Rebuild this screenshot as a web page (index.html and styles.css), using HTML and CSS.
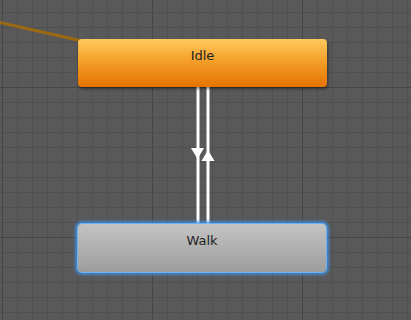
FILE: index.html
```html
<!DOCTYPE html>
<html lang="en">
<head>
    <meta charset="UTF-8">
    <meta name="viewport" content="width=device-width, initial-scale=1.0">
    <title>Animator</title>
    <link rel="stylesheet" href="styles.css">
</head>
<body>
    <div class="graph">
        <svg class="edges" width="411" height="320" viewBox="0 0 411 320">
            <!-- transition coming from off-screen -->
            <line x1="-2" y1="22" x2="82" y2="41" stroke="#9c6a12" stroke-width="3"/>
            <!-- Idle -> Walk -->
            <line x1="198" y1="87" x2="198" y2="224" stroke="#ffffff" stroke-width="3"/>
            <polygon points="191,148 204,148 197.5,159" fill="#ffffff"/>
            <!-- Walk -> Idle -->
            <line x1="208" y1="87" x2="208" y2="224" stroke="#ffffff" stroke-width="3"/>
            <polygon points="201.5,161 214.5,161 208,150" fill="#ffffff"/>
        </svg>

        <div class="node node-default idle">Idle</div>
        <div class="node node-selected walk">Walk</div>
    </div>
</body>
</html>
```

FILE: styles.css
```css
body {
    margin: 0;
    padding: 0;
    background-color: #595959;
    font-family: "DejaVu Sans", Verdana, sans-serif;
}
.graph {
    position: relative;
    width: 411px;
    height: 320px;
    overflow: hidden;
    background-color: #595959;
    background-image:
        linear-gradient(to right, #464646 1px, transparent 1px),
        linear-gradient(to bottom, #464646 1px, transparent 1px),
        linear-gradient(to right, #505050 1px, transparent 1px),
        linear-gradient(to bottom, #505050 1px, transparent 1px);
    background-size: 150px 150px, 150px 150px, 15px 15px, 15px 15px;
    background-position: 2px 87px, 2px 87px, 2px 12px, 2px 12px;
}
.edges {
    position: absolute;
    left: 0;
    top: 0;
}
.node {
    position: absolute;
    box-sizing: border-box;
    width: 249px;
    height: 48px;
    padding-top: 9px;
    border-radius: 4px;
    text-align: center;
    font-size: 13px;
    line-height: 16px;
    color: #222;
}
.node-default {
    background: linear-gradient(to bottom, #ffc95c 0%, #f4a02a 45%, #e67200 100%);
    box-shadow: 1px 2px 3px rgba(0,0,0,0.45);
}
.node-selected {
    background: linear-gradient(to bottom, #c3c3c3 0%, #9d9d9d 100%);
    box-shadow: 0 0 0 1px #6ab4f5, 0 0 3px 3px rgba(60,150,240,0.75);
}
.idle {
    left: 78px;
    top: 39px;
}
.walk {
    left: 78px;
    top: 224px;
    width: 248px;
}
```
